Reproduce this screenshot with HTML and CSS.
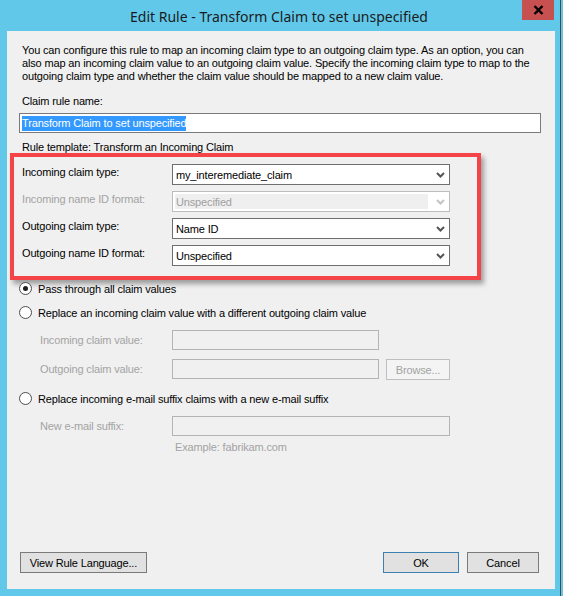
FILE: index.html
```html
<!DOCTYPE html>
<html>
  <head>
    <meta charset="utf-8">
    <title>Edit Rule - Transform Claim to set unspecified</title>
    <link rel="stylesheet" href="styles.css">
  </head>
  <body>
    <div class="window">
      <div class="titlebar">
        <span class="title">Edit Rule - Transform Claim to set unspecified</span>
        <span class="close"><svg width="11" height="10" viewBox="0 0 11 10"><path d="M1.5 1 L9.5 9 M9.5 1 L1.5 9" stroke="#000" stroke-width="2.4"/></svg></span>
      </div>
      <div class="client">
        <p class="intro">You can configure this rule to map an incoming claim type to an outgoing claim type. As an option, you can also map an incoming claim value to an outgoing claim value. Specify the incoming claim type to map to the outgoing claim type and whether the claim value should be mapped to a new claim value.</p>

        <div class="label">Claim rule name:</div>
        <div class="textbox name"><span class="selected">Transform Claim to set unspecified</span></div>
        <div class="label template">Rule template: Transform an Incoming Claim</div>

        <div class="highlight">
          <div class="row">
            <span class="row-label">Incoming claim type:</span>
            <div class="combo"><span>my_interemediate_claim</span><svg class="chev" width="9" height="6" viewBox="0 0 9 6"><path d="M1 1 L4.5 4.5 L8 1" fill="none" stroke="currentColor" stroke-width="2"/></svg></div>
          </div>
          <div class="row disabled">
            <span class="row-label">Incoming name ID format:</span>
            <div class="combo"><span class="inner">Unspecified</span><svg class="chev" width="9" height="6" viewBox="0 0 9 6"><path d="M1 1 L4.5 4.5 L8 1" fill="none" stroke="currentColor" stroke-width="2"/></svg></div>
          </div>
          <div class="row">
            <span class="row-label">Outgoing claim type:</span>
            <div class="combo"><span>Name ID</span><svg class="chev" width="9" height="6" viewBox="0 0 9 6"><path d="M1 1 L4.5 4.5 L8 1" fill="none" stroke="currentColor" stroke-width="2"/></svg></div>
          </div>
          <div class="row">
            <span class="row-label">Outgoing name ID format:</span>
            <div class="combo"><span>Unspecified</span><svg class="chev" width="9" height="6" viewBox="0 0 9 6"><path d="M1 1 L4.5 4.5 L8 1" fill="none" stroke="currentColor" stroke-width="2"/></svg></div>
          </div>
        </div>

        <div class="option first"><span class="radio checked"></span>Pass through all claim values</div>
        <div class="option"><span class="radio"></span>Replace an incoming claim value with a different outgoing claim value</div>
        <div class="sub">
          <span class="sub-label">Incoming claim value:</span>
          <div class="textbox off short"></div>
        </div>
        <div class="sub">
          <span class="sub-label">Outgoing claim value:</span>
          <div class="textbox off short"></div>
          <span class="button off browse">Browse...</span>
        </div>
        <div class="option third"><span class="radio"></span>Replace incoming e-mail suffix claims with a new e-mail suffix</div>
        <div class="sub">
          <span class="sub-label">New e-mail suffix:</span>
          <div class="textbox off long"></div>
        </div>
        <div class="example">Example: fabrikam.com</div>

        <div class="actions">
          <span class="button view">View Rule Language...</span>
          <span class="spacer"></span>
          <span class="button ok">OK</span>
          <span class="button cancel">Cancel</span>
        </div>
      </div>
    </div>
  </body>
</html>
```

FILE: styles.css
```css
body {
  margin: 0;
  background: #61c8ea;
  font-family: "Liberation Sans", Arial, sans-serif;
  font-size: 11px;
  letter-spacing: -0.15px;
  color: #000;
}

.window {
  width: 561px;
  height: 596px;
  position: relative;
  display: flex;
  flex-direction: column;
  background: #61c8ea;
  border-right: 1px solid #4a4a4a;
  box-sizing: border-box;
  overflow: hidden;
}

.titlebar {
  height: 31px;
  position: relative;
  display: flex;
  justify-content: center;
  align-items: center;
  padding-right: 2px;
}

.title {
  font-family: "Noto Sans", "Open Sans", sans-serif;
  font-size: 14px;
  letter-spacing: 0;
  color: #1b1b1b;
  padding-top: 1px;
}

.close {
  position: absolute;
  top: 0;
  left: 522px;
  width: 32px;
  height: 20px;
  background: #c75050;
  display: flex;
  justify-content: center;
  align-items: center;
}

.client {
  margin-left: 7px;
  width: 548px;
  height: 558px;
  background: #f0f0f0;
  box-sizing: border-box;
  padding: 13px 0 0 15px;
  display: flex;
  flex-direction: column;
}

.intro {
  margin: 0;
  width: 520px;
  line-height: 13px;
}

.label {
  margin-top: 12px;
  line-height: 13px;
}

.textbox {
  height: 20px;
  box-sizing: border-box;
  border: 1px solid #7a7a7a;
  background: #fff;
  display: flex;
  align-items: center;
}

.textbox.name {
  margin: 5px 0 0 -3px;
  width: 522px;
  padding-left: 2px;
}

.selected {
  background: #3399ff;
  color: #fff;
  line-height: 15px;
}

.label.template {
  margin-top: 8px;
}

.highlight {
  margin: -1px 0 0 -12px;
  width: 471px;
  box-sizing: border-box;
  border: 4px solid #f44448;
  padding: 7px 0 10px 8px;
  box-shadow: 3px 4px 5px rgba(0, 0, 0, 0.35);
  display: flex;
  flex-direction: column;
  gap: 6px;
}

.row {
  display: grid;
  grid-template-columns: 150px 278px;
  height: 21px;
}

.row-label {
  line-height: 16px;
}

.combo {
  box-sizing: border-box;
  border: 1px solid #6f6f6f;
  background: #fff;
  display: flex;
  align-items: center;
  padding: 0 4px 0 2px;
  color: #000;
}

.combo span {
  flex: 1;
  padding-left: 1px;
}

.chev {
  color: #555;
}

.row.disabled .row-label {
  color: #a3a3a3;
}

.row.disabled .combo {
  border-color: #bdbdbd;
  color: #a0a0a0;
  padding: 2px 4px 2px 2px;
  align-items: stretch;
}

.row.disabled .combo .inner {
  background: #efefef;
  display: flex;
  align-items: center;
  margin-right: 8px;
}

.row.disabled .chev {
  color: #c4c4c4;
  align-self: center;
}

.option {
  display: flex;
  align-items: center;
  height: 13px;
  margin-top: 11px;
  margin-left: -3px;
}

.option.first {
  margin-top: 2px;
}

.option.third {
  margin-top: 12px;
}

.radio {
  width: 11px;
  height: 11px;
  border: 1px solid #4d4d4d;
  border-radius: 50%;
  background: #fff;
  margin-right: 6px;
  display: flex;
  justify-content: center;
  align-items: center;
}

.radio.checked::after {
  content: "";
  width: 5px;
  height: 5px;
  border-radius: 50%;
  background: #1e1e1e;
}

.sub {
  display: flex;
  align-items: center;
  margin-top: 11px;
  padding-left: 18px;
  color: #a3a3a3;
}

.sub + .sub {
  margin-top: 7px;
}

.sub-label {
  width: 132px;
}

.textbox.off {
  border-color: #b4b4b4;
  background: #f0f0f0;
}

.textbox.short {
  width: 207px;
}

.textbox.long {
  width: 278px;
}

.example {
  margin: 5px 0 0 153px;
  color: #a3a3a3;
}

.button {
  height: 21px;
  box-sizing: border-box;
  border: 1px solid #adadad;
  background: #e1e1e1;
  display: flex;
  justify-content: center;
  align-items: center;
}

.button.off {
  color: #a3a3a3;
  border-color: #bfbfbf;
  background: #f4f4f4;
}

.browse {
  width: 64px;
  margin-left: 7px;
  margin-top: 2px;
}

.actions {
  margin-top: auto;
  margin-bottom: 16px;
  margin-left: -2px;
  width: 519px;
  display: flex;
  gap: 8px;
}

.view {
  width: 127px;
  border-color: #7a7a7a;
}

.spacer {
  flex: 1;
}

.ok {
  width: 76px;
  border-color: #3c7fb1;
}

.cancel {
  width: 72px;
  border-color: #7a7a7a;
}
```
